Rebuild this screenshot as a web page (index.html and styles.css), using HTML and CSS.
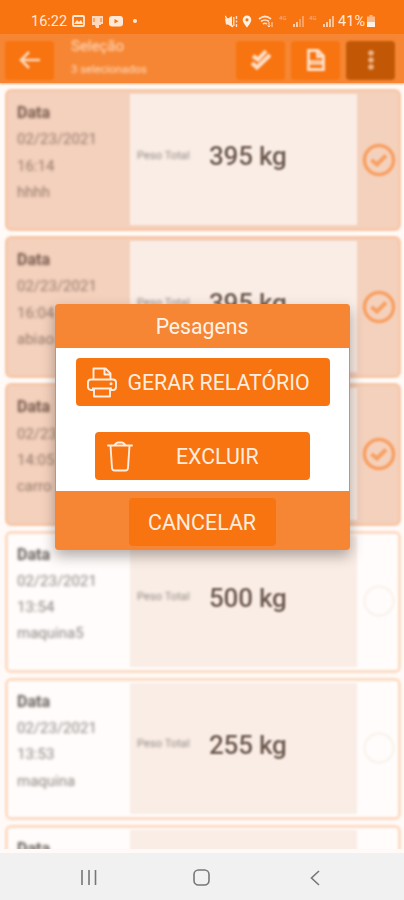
FILE: index.html
```html
<!DOCTYPE html>
<html lang="pt-BR">
<head>
  <meta charset="UTF-8" />
  <meta name="viewport" content="width=device-width, initial-scale=1.0" />
  <title>Pesagens</title>
  <link rel="stylesheet" href="styles.css">
</head>
<body>
  <div class="screen">
    <div class="status-bar">
      <span class="clock">16:22</span>
      <svg class="st-image" width="13" height="12" viewBox="0 0 13 12"><rect x="1" y="1" width="11" height="10" rx="1" fill="none" stroke="#ffe9d8" stroke-width="1.8"/><path d="M2 9l3-4 2 2 2-2 2 4z" fill="#ffe9d8"/></svg>
      <svg class="st-app" width="13" height="13" viewBox="0 0 13 13"><path d="M1 1h11v8h-2v1H8v3H5l-1-3H1z" fill="#ffd9bd"/><path d="M3 3v4M10 3v4" stroke="#f77410"/></svg>
      <svg class="st-video" width="14" height="11" viewBox="0 0 14 11"><rect width="14" height="10.500" rx="3" fill="#ffe9d8"/><path d="M5.500 3v4.500L9.500 5.200z" fill="#f77410"/></svg>
      <span class="dot"></span>
      <span class="spacer"></span>
      <svg class="st-mute" width="13" height="13" viewBox="0 0 13 13"><path d="M0 3.500h3l4-2.500v11L3 9.500H1z" fill="#ffe9d8"/><path d="M0 1l8 11" stroke="#ffe9d8" stroke-width="1.300"/><path d="M8.800 2v9M11.500 1v3M11.500 5.500v2M11.500 9v3" stroke="#ffe0ca" stroke-width="1.400"/></svg>
      <svg class="st-pin" width="10" height="13" viewBox="0 0 10 13"><path fill-rule="evenodd" d="M5 .5a4.300 4.300 0 0 0-4.300 4.300C.7 8 5 12.500 5 12.500S9.300 8 9.300 4.800A4.300 4.300 0 0 0 5 .5zm0 2.700a1.600 1.600 0 1 1 0 3.200 1.600 1.600 0 0 1 0-3.200z" fill="#fff1e6"/></svg>
      <svg class="st-wifi" width="16" height="13" viewBox="0 0 16 13"><path d="M1 4q6-5 12 0M3 6.500q4-3 8 0M5 9q2-1.500 4 0" fill="none" stroke="#ffe0ca" stroke-width="1.700"/><path d="M11 7v5M14 7v5M9.500 10.500l1.500 1.500 1.500-1.500" fill="none" stroke="#ffe0ca"/></svg>
      <span class="net">4G</span>
      <svg class="st-signal" width="11" height="12" viewBox="0 0 11 12"><path d="M1 9v3M4 7v5" stroke="#ffe0ca" stroke-width="1.600"/><path d="M7 4v8M10 1v11" stroke="#fbb481" stroke-width="1.400"/></svg>
      <span class="net">4G</span>
      <svg class="st-signal" width="11" height="12" viewBox="0 0 11 12"><path d="M1 9v3M4 7v5M7 4v8" stroke="#ffe0ca" stroke-width="1.600"/><path d="M10 1v11" stroke="#fdd0ae" stroke-width="1.600"/></svg>
      <span class="battery-text">41%</span>
      <svg class="st-battery" width="8" height="12" viewBox="0 0 8 12"><path d="M2.500 0h3v1.500H8V12H0V1.500h2.500z" fill="#fbb888"/><path d="M0 7h8v5H0z" fill="#fff1e6"/></svg>
    </div>

    <div class="app">
      <div class="toolbar">
        <button class="tool-button back"><svg width="22" height="20" viewBox="0 0 22 20"><path d="M21 10H3M10 2L2 10l8 8" fill="none" stroke="#ffd6b8" stroke-width="2.600"/></svg></button>
        <div class="toolbar-title">
          <div class="title">Seleção</div>
          <div class="subtitle">3 selecionados</div>
        </div>
        <button class="tool-button"><svg width="22" height="22" viewBox="0 0 22 22"><path d="M3 7l5 3.500 8-8.500M2 14l5 4.500L20 6" fill="none" stroke="#ffe0ca" stroke-width="4"/></svg></button>
        <button class="tool-button"><svg width="20" height="22" viewBox="0 0 20 22"><path d="M2.500 12V1.500H12l5.500 5.500v5M11.500 2v5.500h6M2.500 14v6.500h15V14" fill="none" stroke="#ffe0ca" stroke-width="2.800"/><path d="M1 13.500h18" stroke="#ffdcc3" stroke-width="4.500"/><path d="M5 13.500h10" stroke="#fba869" stroke-width="1.500" stroke-dasharray="2.500 1"/></svg></button>
        <button class="tool-button menu"><svg width="8" height="22" viewBox="0 0 8 22"><g fill="#edb183"><circle cx="4" cy="4" r="2.800"/><circle cx="4" cy="11" r="2.800"/><circle cx="4" cy="18" r="2.800"/></g></svg></button>
      </div>
      <div class="list" id="list"></div>
    </div>

    <div class="overlay">
      <div class="modal">
        <div class="modal-header">Pesagens</div>
        <div class="modal-body">
          <button class="action report">
            <svg width="30" height="31" viewBox="0 0 30 31"><g fill="none" stroke="#ffeddf" stroke-width="1.900" stroke-linejoin="round"><path d="M6.500 12.500V1.500h12l5 5v6M17.500 1.500V7.500h6"/><path d="M6.500 23H4a3 3 0 0 1-3-3v-4.500a3 3 0 0 1 3-3h22a3 3 0 0 1 3 3V20a3 3 0 0 1-3 3h-2.500"/><path d="M5 21.500h20M7 21.500v8h16v-8"/></g><circle cx="24" cy="16.800" r="1.500" fill="#ffeddf"/></svg>
            <span>GERAR RELATÓRIO</span>
          </button>
          <button class="action delete">
            <svg width="26" height="31" viewBox="0 0 26 31"><g fill="none" stroke="#ffeddf" stroke-width="1.900" stroke-linejoin="round" stroke-linecap="round"><path d="M1 4.500h24M7.500 4.500q1.500-3 4-3h3q2.500 0 4 3M3.500 4.500L5 27q.2 2.500 2.500 2.500h11q2.300 0 2.500-2.500L22.500 4.500"/></g></svg>
            <span>EXCLUIR</span>
          </button>
        </div>
        <div class="modal-footer">
          <button class="cancel">CANCELAR</button>
        </div>
      </div>
    </div>
  </div>

  <div class="nav-bar">
    <svg width="16" height="16" viewBox="0 0 16 16"><path d="M1 0v15M8 0v15M14.500 0v15" stroke="#777" stroke-width="1.600"/></svg>
    <svg width="17" height="17" viewBox="0 0 17 17"><rect x="1" y="1" width="15" height="15" rx="4.500" fill="none" stroke="#777" stroke-width="1.600"/></svg>
    <svg width="10" height="16" viewBox="0 0 10 16"><path d="M9 1L1.500 8 9 15" fill="none" stroke="#777" stroke-width="1.600"/></svg>
  </div>

  <script>
    const weighings = [
      { date: "02/23/2021", time: "16:14", name: "hhhh", weight: "395 kg", selected: true },
      { date: "02/23/2021", time: "16:04", name: "abiao", weight: "395 kg", selected: true },
      { date: "02/23/2021", time: "14:05", name: "carro", weight: "395 kg", selected: true },
      { date: "02/23/2021", time: "13:54", name: "maquina5", weight: "500 kg", selected: false },
      { date: "02/23/2021", time: "13:53", name: "maquina", weight: "255 kg", selected: false },
      { date: "", time: "", name: "", weight: "", selected: false },
    ];
    const check = '<svg width="34" height="34" viewBox="0 0 34 34"><circle cx="17" cy="17" r="14.500" fill="none" stroke="#f8a063" stroke-width="3.600"/><path d="M9.500 17l5.500 4.500 9-9" fill="none" stroke="#f8a063" stroke-width="4"/></svg>';
    const empty = '<svg width="34" height="34" viewBox="0 0 34 34"><circle cx="17" cy="17" r="14.500" fill="none" stroke="#fbf3ed" stroke-width="2.500"/></svg>';

    document.getElementById('list').innerHTML = weighings.map(item => `
      <div class="card ${item.selected ? 'selected' : ''}">
        <div class="info">
          <strong>Data</strong>
          <span>${item.date}</span>
          <span>${item.time}</span>
          <span>${item.name}</span>
        </div>
        <div class="weight">
          <span class="label">${item.weight ? 'Peso Total' : ''}</span>
          <span class="value">${item.weight}</span>
        </div>
        <div class="check">${item.selected ? check : empty}</div>
      </div>
    `).join('');
  </script>
</body>
</html>
```
FILE: styles.css
```css
* {
  margin: 0;
  padding: 0;
  box-sizing: border-box;
}
body {
  display: flex;
  flex-direction: column;
  height: 900px;
  font-family: Roboto, "Liberation Sans", sans-serif;
  background: #fffaf7;
  overflow: hidden;
}
button {
  border: none;
  font-family: inherit;
}
svg {
  display: block;
  flex: none;
}
.screen {
  position: relative;
  height: 853px;
  display: flex;
  flex-direction: column;
  overflow: hidden;
}
.status-bar {
  height: 34px;
  flex: none;
  display: flex;
  align-items: center;
  padding: 8px 29px 0 31px;
  background: #f77410;
  color: #ffe9d8;
  font-size: 14.5px;
}
.clock {
  width: 36px;
  margin-right: 5px;
}
.st-app {
  margin-left: 6px;
}
.st-video {
  margin-left: 5px;
}
.dot {
  width: 4px;
  height: 4px;
  margin-left: 10px;
  border-radius: 50%;
  background: #ffe9d8;
}
.spacer {
  flex: 1;
}
.st-pin {
  margin-left: 4px;
}
.st-wifi {
  margin-left: 6px;
}
.net {
  width: 9px;
  margin: -8px 5px 0 5px;
  font-size: 6px;
  color: #fbb481;
}
.battery-text {
  margin: 0 2px 0 4px;
  font-size: 14.5px;
}
.app {
  height: 815px;
  flex: none;
  overflow: hidden;
}
.toolbar {
  height: 49px;
  display: flex;
  align-items: center;
  padding: 3px 9px 0 5px;
  background: #f68633;
  box-shadow: 0 1px 2px #f9a468;
}
.tool-button {
  width: 49px;
  height: 39px;
  margin-left: 6px;
  display: flex;
  align-items: center;
  justify-content: center;
  border-radius: 4px;
  background: #f77410;
  filter: blur(1.1px);
}
.tool-button.back {
  margin-left: 0;
}
.tool-button.menu {
  background: #c25806;
}
.toolbar-title {
  flex: 1;
  align-self: flex-start;
  padding-left: 17px;
  color: #ffdcc3;
  filter: blur(1.4px);
}
.title {
  font-size: 15px;
  line-height: 18px;
}
.subtitle {
  padding-top: 7px;
  font-size: 11.3px;
  line-height: 16px;
}
.list {
  display: flex;
  flex-direction: column;
  gap: 5px;
  padding: 6px 3px 0 5px;
  filter: blur(0.9px);
}
.card {
  height: 142.2px;
  flex: none;
  display: flex;
  padding: 2px 41px 3px 9px;
  border: 3px solid #fddcc5;
  border-radius: 6px;
  background: #fffcfb;
  position: relative;
}
.card.selected {
  border-color: #f7c8aa;
  background: #f4d1bd;
}
.info {
  width: 113px;
  display: flex;
  flex-direction: column;
  padding-top: 6px;
  font-size: 15px;
  line-height: 26.3px;
  color: #8c8580;
  filter: blur(0.9px);
}
.selected .info {
  color: #94786a;
}
.info strong {
  font-size: 16px;
  color: #665e5a;
}
.selected .info strong {
  color: #73564a;
}
.weight {
  flex: 1;
  display: flex;
  align-items: center;
  padding: 0 0 7px 7px;
  background: #faede6;
}
.label {
  width: 72px;
  padding-bottom: 2px;
  font-size: 11.2px;
  color: #8f8782;
  filter: blur(0.8px);
}
.value {
  font-size: 26px;
  font-weight: 500;
  letter-spacing: -0.2px;
  color: #6c594e;
  filter: blur(0.3px);
}
.check {
  position: absolute;
  right: 2.5px;
  top: 50.5px;
}
.overlay {
  position: absolute;
  inset: 0;
  display: flex;
  align-items: center;
  justify-content: center;
}
.modal {
  width: 295px;
  height: 246px;
  display: flex;
  flex-direction: column;
  border: 1px solid #f68633;
  border-radius: 3px;
  background: #fff;
  box-shadow: 0 6px 14px rgba(60, 50, 45, 0.4);
}
.modal-header {
  height: 43px;
  display: flex;
  align-items: center;
  justify-content: center;
  padding-top: 1px;
  background: #f68633;
  color: #fff3e9;
  font-size: 21.2px;
}
.modal-body {
  height: 143px;
  display: flex;
  flex-direction: column;
  align-items: center;
  gap: 26px;
  padding: 10px 0 0 1px;
}
.action {
  height: 48px;
  display: flex;
  align-items: center;
  border-radius: 4px;
  background: #f77410;
  color: #ffeddf;
  font-size: 21.3px;
  line-height: 26px;
}
.action span {
  padding-top: 2px;
}
.report {
  width: 254px;
  padding: 1px 0 0 11px;
}
.report span {
  margin-left: 11px;
}
.delete {
  width: 215px;
  padding: 1px 0 0 12px;
}
.delete span {
  margin-left: 43px;
}
.modal-footer {
  flex: 1;
  display: flex;
  align-items: flex-start;
  justify-content: center;
  padding-top: 7px;
  background: #f68633;
}
.cancel {
  width: 147px;
  height: 48px;
  padding-top: 2px;
  border-radius: 4px;
  background: #f77410;
  color: #ffeddf;
  font-size: 21.4px;
}
.nav-bar {
  height: 47px;
  display: flex;
  align-items: center;
  padding: 2px 0 0 81px;
  background: #f1f1f1;
}
.nav-bar svg:nth-child(2) {
  margin: 0 100px 0 96px;
}
```
